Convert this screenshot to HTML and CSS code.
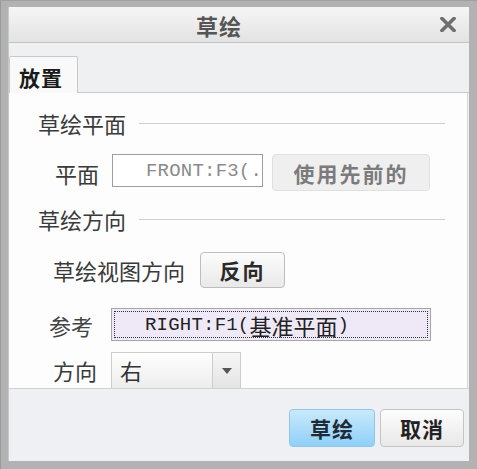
FILE: index.html
```html
<!DOCTYPE html>
<html lang="zh">
<head>
<meta charset="utf-8">
<link rel="stylesheet" href="styles.css">
</head>
<body>
<div class="frame">
  <div class="window">
    <div class="titlebar">
      <span class="title">草绘</span>
      <svg class="close" width="16" height="15" viewBox="0 0 16 15"><path d="M2 1.5 L14 13.5 M14 1.5 L2 13.5" stroke="#6f6f6f" stroke-width="3.6" stroke-linecap="square"/></svg>
    </div>
    <div class="tabstrip">
      <div class="tab">放置</div>
      <div class="tabfill"></div>
    </div>
    <div class="panel">
      <div class="section s1"><span class="sec-text">草绘平面</span><span class="sec-line"></span></div>
      <div class="row r-plane">
        <span class="label l-plane">平面</span>
        <div class="field"><span class="mono">FRONT:F3(.</span></div>
        <button class="btn btn-prev">使用先前的</button>
      </div>
      <div class="section s2"><span class="sec-text">草绘方向</span><span class="sec-line"></span></div>
      <div class="row r-view">
        <span class="label l-view">草绘视图方向</span>
        <button class="btn btn-flip">反向</button>
      </div>
      <div class="row r-ref">
        <span class="label l-ref">参考</span>
        <div class="reffield"><div class="focus"><span class="mono dark">RIGHT:F1(</span><span class="cjk">基准平面</span><span class="mono dark">)</span></div></div>
      </div>
      <div class="row r-dir">
        <span class="label l-dir">方向</span>
        <div class="select"><span class="sel-text">右</span><span class="sel-arrow"><svg width="10" height="6" viewBox="0 0 10 6"><path d="M0 0 H10 L5 6 Z" fill="#555"/></svg></span></div>
      </div>
    </div>
    <div class="footer">
      <button class="fbtn ok">草绘</button>
      <button class="fbtn cancel">取消</button>
    </div>
  </div>
</div>
</body>
</html>
```
FILE: styles.css
```css
html, body {
  margin: 0;
  padding: 0;
  width: 477px;
  height: 469px;
  overflow: hidden;
  font-family: "Noto Sans CJK SC", "Noto Sans", sans-serif;
}
.frame {
  width: 477px;
  height: 469px;
  box-sizing: border-box;
  background: #b2b2b2;
  padding: 6px 8px 8px 7px;
  border-left: 1px solid #9a9a9a;
  border-top: 1px solid #a0a0a0;
}
.window {
  height: 100%;
  background: #eef0f2;
  display: flex;
  flex-direction: column;
  border-left: 1px solid #c8c8c8;
}
.titlebar {
  height: 35px;
  flex: none;
  background: linear-gradient(#f5f5f5, #e3e3e3);
  border-bottom: 1px solid #c2c2c2;
  position: relative;
  display: flex;
  align-items: center;
  justify-content: center;
}
.title {
  font-size: 22px;
  line-height: 24px;
  font-weight: bold;
  color: #555;
  margin-right: 40px;
  letter-spacing: 1px;
}
.close {
  position: absolute;
  right: 13px;
  top: 10px;
}
.tabstrip {
  height: 50px;
  flex: none;
  display: flex;
  align-items: flex-end;
  background: #eff0f2;
}
.tab {
  width: 69px;
  height: 37px;
  box-sizing: border-box;
  background: #f9f9fa;
  border: 1px solid #c9c9c9;
  border-bottom: none;
  border-radius: 2px 2px 0 0;
  font-size: 21px;
  font-weight: bold;
  color: #1a1a1a;
  line-height: 24px;
  padding: 8px 0 0 9px;
  letter-spacing: 1px;
}
.tabfill {
  flex: 1;
  height: 0;
  border-bottom: 1px solid #c9c9c9;
}
.panel {
  height: 295px;
  flex: none;
  background: #fdfdfd;
  margin-right: 1px;
  border-right: 1px solid #d8d8d8;
  padding: 0 22px 0 29px;
  box-sizing: border-box;
  overflow: hidden;
}
.section {
  display: flex;
  align-items: center;
  height: 24px;
}
.s1 { margin-top: 18px; }
.s2 { margin-top: 16px; }
.sec-text {
  font-size: 22px;
  line-height: 24px;
  color: #3a3a3a;
  margin-right: 13px;
}
.sec-line {
  flex: 1;
  height: 1px;
  background: #cfcfcf;
  margin-top: 1px;
}
.row {
  display: flex;
  align-items: center;
}
.label {
  font-size: 22px;
  line-height: 24px;
  color: #3a3a3a;
}
.r-plane { margin-top: 19px; height: 37px; align-items: flex-start; padding-left: 17px; }
.r-plane .label { margin-top: 7px; margin-right: 13px; }
.field {
  width: 151px;
  height: 33px;
  box-sizing: border-box;
  border: 1px solid #9d9d9d;
  background: #fff;
  padding-left: 33px;
  overflow: hidden;
  white-space: nowrap;
  display: flex;
  align-items: center;
}
.mono {
  font-family: "Liberation Mono", "DejaVu Sans Mono", monospace;
  font-size: 19px;
  color: #8a8a8a;
  letter-spacing: 0.2px;
}
.mono.dark { color: #222; }
.cjk {
  font-size: 22px;
  color: #222;
  line-height: 24px;
}
.btn {
  font-family: "Noto Sans CJK SC", sans-serif;
  font-weight: bold;
  font-size: 21px;
  line-height: 24px;
  border-radius: 4px;
  padding: 0;
  box-sizing: border-box;
}
.btn-prev {
  margin-left: 9px;
  width: 158px;
  height: 37px;
  background: #efefef;
  border: 1px solid #e0e0e0;
  color: #7b7b7b;
  letter-spacing: 2px;
}
.r-view { margin-top: 21px; height: 36px; padding-left: 15px; }
.r-view .label { margin-right: 15px; }
.btn-flip {
  width: 85px;
  height: 36px;
  background: linear-gradient(#fcfcfc, #e9e9e9);
  border: 1px solid #bdbdbd;
  color: #2a2a2a;
  letter-spacing: 2px;
}
.r-ref { margin-top: 20px; height: 33px; padding-left: 11px; }
.r-ref .label { margin-right: 18px; color: #444; }
.reffield {
  width: 320px;
  height: 33px;
  box-sizing: border-box;
  border: 1px solid #a5a5a5;
  background: #efe9f7;
  padding: 2px;
}
.focus {
  height: 100%;
  box-sizing: border-box;
  border: 1px dotted #333;
  display: flex;
  align-items: center;
  padding-left: 30px;
  white-space: nowrap;
}
.r-dir { margin-top: 11px; height: 35px; padding-left: 15px; align-items: flex-start; }
.r-dir .label { margin-right: 14px; margin-top: 6px; }
.select {
  width: 130px;
  height: 36px;
  box-sizing: border-box;
  border: 1px solid #cdcdcd;
  border-bottom: none;
  background: linear-gradient(#ffffff, #ececec);
  display: flex;
}
.sel-text {
  flex: 1;
  font-size: 22px;
  line-height: 24px;
  color: #333;
  padding: 5px 0 0 8px;
}
.sel-arrow {
  width: 27px;
  border-left: 1px solid #cdcdcd;
  background: linear-gradient(#f6f6f6, #e4e4e4);
  display: flex;
  align-items: center;
  justify-content: center;
}
.footer {
  flex: 1;
  border-top: 1px solid #d2d2d2;
  background: #eef0f3;
  display: flex;
  justify-content: flex-end;
  align-items: flex-start;
  padding: 20px 5px 0 0;
  gap: 5px;
}
.fbtn {
  height: 38px;
  box-sizing: border-box;
  border-radius: 4px;
  font-family: "Noto Sans CJK SC", sans-serif;
  font-weight: bold;
  font-size: 21px;
  line-height: 24px;
  padding: 0;
  letter-spacing: 1px;
  color: #222;
}
.ok {
  width: 86px;
  background: linear-gradient(#c9e9fc, #8fd0f8);
  border: 1px solid #8fc6ea;
  color: #1e2b36;
}
.cancel {
  width: 84px;
  background: linear-gradient(#fdfdfd, #e8e8e8);
  border: 1px solid #c4c4c4;
}
```
